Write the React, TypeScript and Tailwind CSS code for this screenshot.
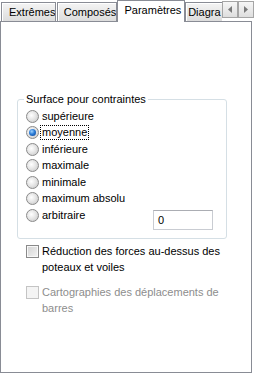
import React from "react";

const options = [
  "supérieure",
  "moyenne",
  "inférieure",
  "maximale",
  "minimale",
  "maximum absolu",
  "arbitraire",
];

const Radio = ({ checked }: { checked?: boolean }) => (
  <span className="w-[13px] h-[13px] shrink-0 rounded-full border border-[#8a8a8a] bg-[radial-gradient(circle_at_40%_40%,#ffffff_0%,#e6e6e6_45%,#c2c2c2_100%)] flex items-center justify-center">
    {checked && (
      <span className="w-[7px] h-[7px] rounded-full bg-[radial-gradient(circle_at_40%_35%,#9fd3ff_0%,#2a7bd6_45%,#0a3e8f_100%)]" />
    )}
  </span>
);

const Check = ({ disabled }: { disabled?: boolean }) => (
  <span
    className={
      disabled
        ? "w-[13px] h-[13px] shrink-0 mt-[2px] border border-[#c4c4c4] bg-[#f4f4f4]"
        : "w-[13px] h-[13px] shrink-0 mt-[2px] border border-[#8a8a8a] bg-[linear-gradient(135deg,#d2d2d2,#f4f4f4)] shadow-[inset_0_0_0_1px_#f8f8f8]"
    }
  />
);

const Tab = ({ label, className }: { label: string; className: string }) => (
  <div
    className={
      "mt-[2px] h-[19px] border-l border-t border-r border-[#898c95] bg-[linear-gradient(#f4f4f4,#dcdcdc)] shadow-[inset_1px_1px_0_#ffffff] flex items-center overflow-hidden whitespace-nowrap " +
      className
    }
  >
    {label}
  </div>
);

const ArrowBtn = ({ dir }: { dir: "left" | "right" }) => (
  <div className="w-[16px] h-[17px] mt-[1px] border border-[#a5a5a5] bg-[linear-gradient(#f6f6f6,#dedede)] flex items-center justify-center">
    <svg width="4" height="7" viewBox="0 0 4 7">
      {dir === "left" ? (
        <path d="M4 0 L0 3.5 L4 7 Z" fill="#7a7a7a" />
      ) : (
        <path d="M0 0 L4 3.5 L0 7 Z" fill="#7a7a7a" />
      )}
    </svg>
  </div>
);

export default function App() {
  return (
    <div className="w-[254px] h-[375px] bg-white text-[11px] leading-[13px] text-black font-['Liberation_Sans',Arial,sans-serif]">
      <div className="flex h-[21px] pl-px">
        <Tab label="Extrêmes" className="w-[55px] pl-[7px]" />
        <Tab label="Composés" className="w-[61px] ml-px pl-[6px]" />
        <div className="relative z-10 w-[68px] h-[22px] border-l border-t border-r border-[#898c95] bg-white flex items-center pl-[6px] pb-[2px] whitespace-nowrap">
          Paramètres
        </div>
        <Tab label="Diagra" className="w-[37px] pl-[2px] border-r-0" />
        <div className="flex">
          <ArrowBtn dir="left" />
          <ArrowBtn dir="right" />
        </div>
      </div>

      <div className="w-[252px] h-[352px] border border-[#898c95] bg-white pt-[71px]">
        <fieldset className="ml-[16px] w-[210px] h-[146px] border border-[#d5dfe5] rounded-[3px] p-0 m-0">
          <legend className="ml-[6px] px-[2px] leading-[13px]">Surface pour contraintes</legend>
          <div className="flex flex-col pt-[2px] pl-[8px] pr-[13px]">
            {options.map((o, i) => (
              <div key={o} className="h-[16.5px] flex items-center">
                <Radio checked={i === 1} />
                <span
                  className={
                    i === 1
                      ? "ml-[2px] px-px outline-1 outline-dotted outline-black outline-offset-0"
                      : "ml-[3px]"
                  }
                >
                  {o}
                </span>
                {i === 6 && (
                  <div className="ml-auto self-start mt-[3px] w-[60px] h-[20px] border border-[#c9ccd2] border-t-[#abadb3] bg-white flex items-center pl-[4px]">
                    0
                  </div>
                )}
              </div>
            ))}
          </div>
        </fieldset>

        <div className="ml-[25px] mt-[4px] flex gap-[3px] leading-[16px]">
          <Check />
          <span>
            Réduction des forces au-dessus des
            <br />
            poteaux et voiles
          </span>
        </div>

        <div className="ml-[25px] mt-[9px] flex gap-[3px] leading-[16px] text-[#8d8d8d]">
          <Check disabled />
          <span>
            Cartographies des déplacements de
            <br />
            barres
          </span>
        </div>
      </div>
    </div>
  );
}
